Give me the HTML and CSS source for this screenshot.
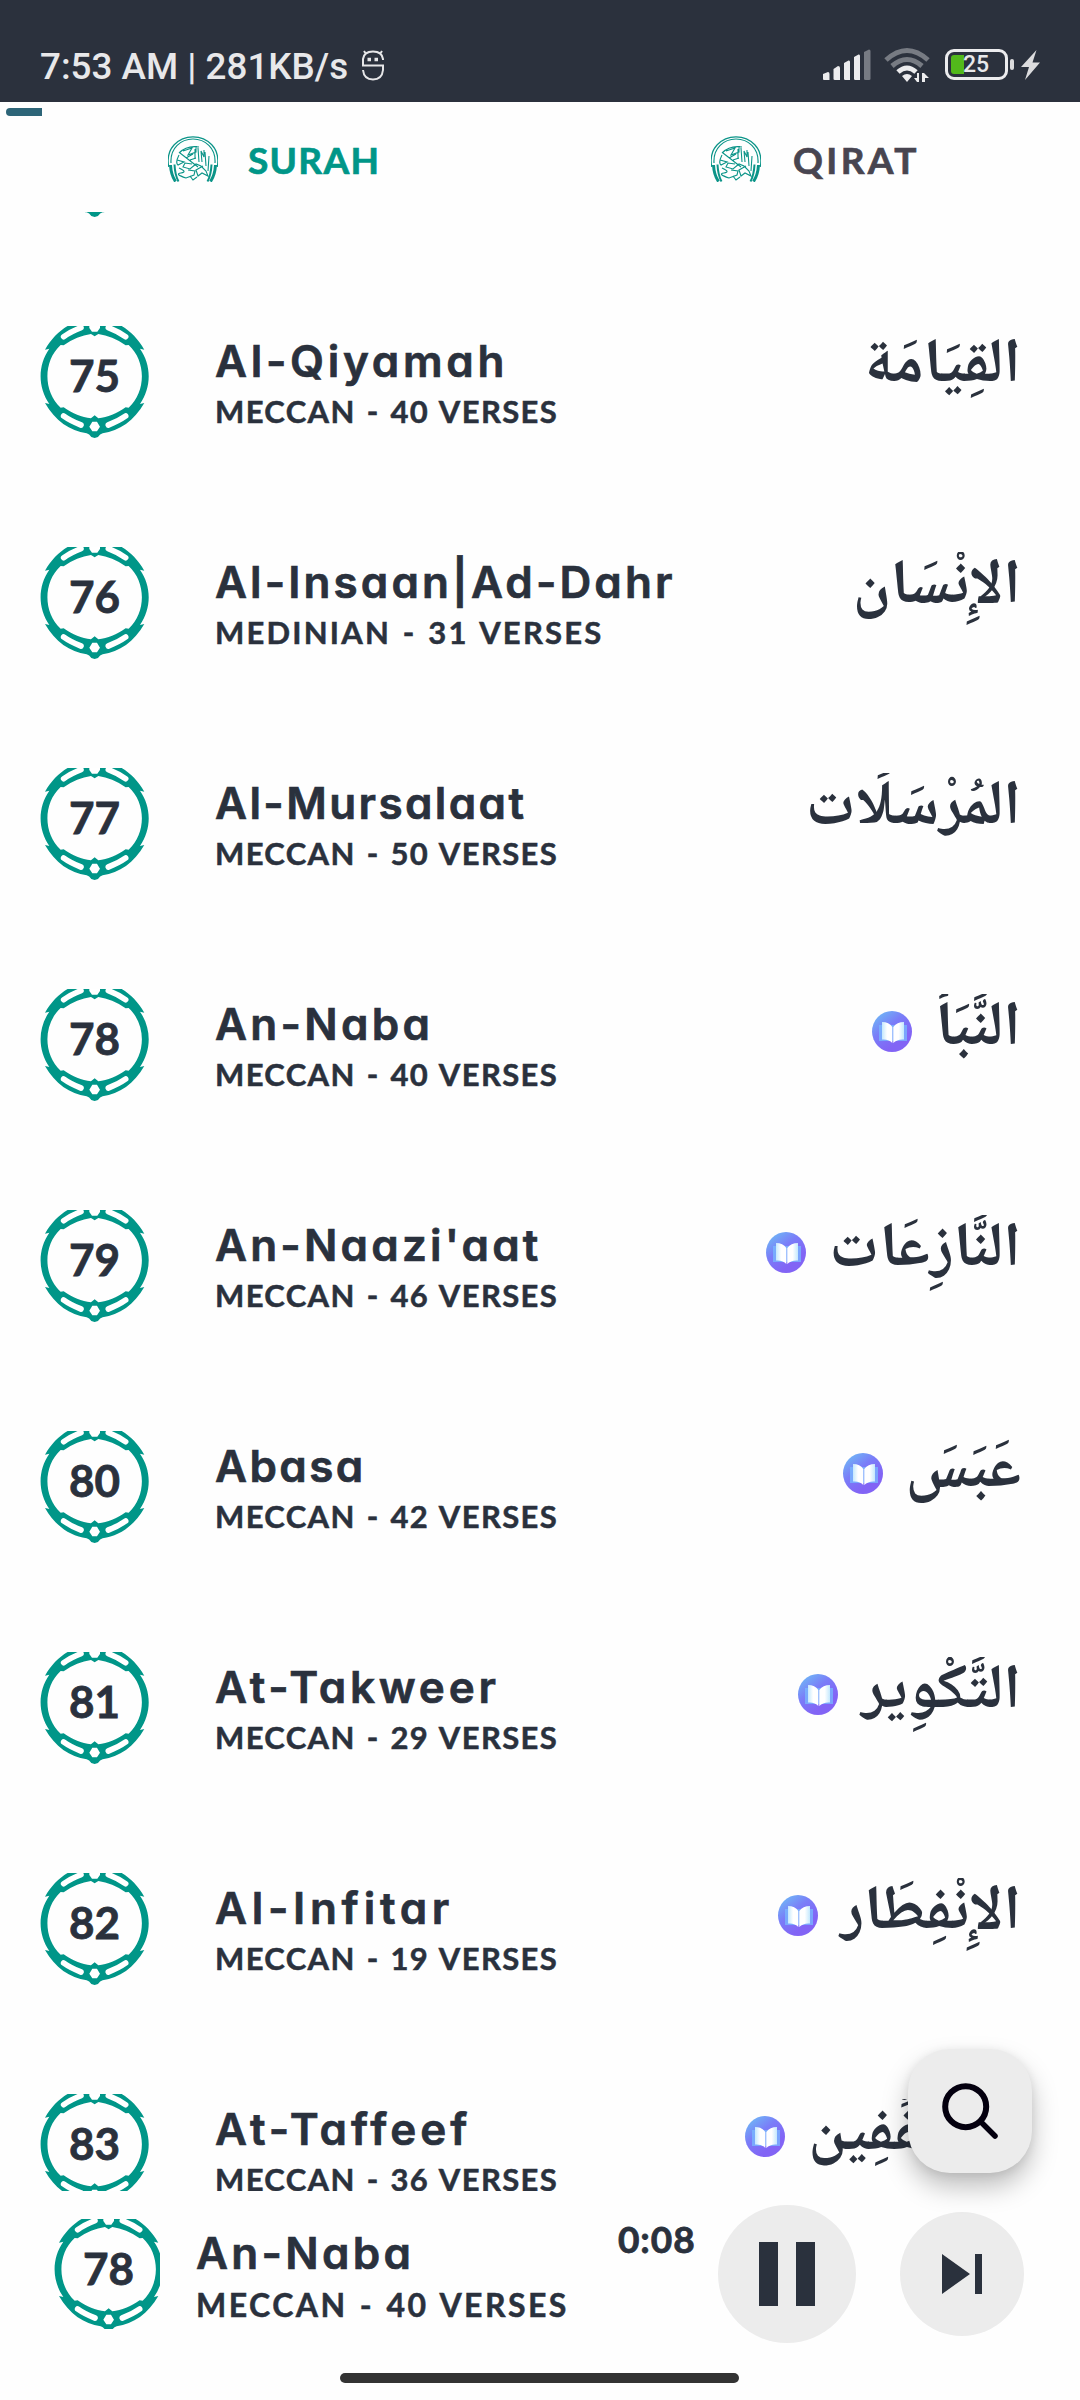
FILE: index.html
```
<!DOCTYPE html>
<html lang="en">
<head>
<meta charset="utf-8">
<title>Surah</title>
<link rel="stylesheet" href="styles.css">
</head>
<body>
<svg class="defs" width="0" height="0" aria-hidden="true">
  <defs>
    <linearGradient id="bg" x1="0" y1="0" x2=".6" y2=".8"><stop offset="0" stop-color="#6cc7f5"/><stop offset=".55" stop-color="#7a7df8"/><stop offset="1" stop-color="#8264f5"/></linearGradient>
    <linearGradient id="pl" x1="0" x2="1"><stop offset="0" stop-color="#c4e8fd"/><stop offset=".5" stop-color="#fff"/></linearGradient>
    <linearGradient id="pr" x1="1" x2="0"><stop offset="0" stop-color="#c4e8fd"/><stop offset=".5" stop-color="#fff"/></linearGradient>
  </defs>
  <symbol id="badge" viewBox="60 78 328 336">
    <path fill="#009688" fill-rule="evenodd" d="M224 414L214 411Q208 402 200 400C150 393 105 362 75 309L88 312C53 262 53 196 88 146L75 149C105 96 150 65 200 58H248C298 65 343 96 373 149L360 146C395 196 395 262 360 312L373 309C343 362 298 393 248 400Q240 402 234 411ZM224 346L213 355C185 352 158 341 131 322L122 323C69 275 69 183 122 135L131 136C158 117 185 106 213 102L224 109L235 102C263 106 290 117 317 136L326 135C379 183 379 275 326 323L317 322C290 341 263 352 235 355Z"/>
    <g stroke="#fff" stroke-width="17" stroke-linecap="round"><path d="M131 348Q152 363 183 375M317 348Q296 363 265 375M131 110Q152 95 183 83M317 110Q296 95 265 83" fill="none"/></g>
    <path fill="#fff" d="M217 365H231L240 380L231 394H217L208 380ZM208 70H240V84L232 95H216L208 84Z"/>
  </symbol>
  <symbol id="book" viewBox="0 0 40 41">
    <ellipse cx="20" cy="20.5" rx="20" ry="20.5" fill="url(#bg)"/>
    <path fill="#78b9ff" opacity=".75" d="M7 14H35V30H7Z"/>
    <path fill="url(#pl)" d="M10 11Q17 11 20.300 16V32Q17 28 10 28.500Z"/>
    <path fill="url(#pr)" d="M32 11Q25 11 21.300 16V32Q25 28 32 28.500Z"/>
  </symbol>
  <symbol id="logo" viewBox="0 0 50 46">
    <g fill="none" stroke="#0b9488">
      <path stroke-width="1.200" d="M.8 31C-3 12 11 .8 25 .8S53 12 49.200 31M3 27C2 12 13 3 25 3S48 12 47 27"/>
      <path stroke-width="3" d="M2.500 29Q3 39 7.500 45.500M47.500 29Q47 39 42.500 45.500"/>
      <path stroke-width="2" d="M6.500 28.500Q7 39 10.500 45.500M43.500 28.500Q43 39 39.500 45.500"/>
      <path stroke-width="1.100" d="M11 17Q19 9 31 11M12 17L30 31M11 19Q7 27 10 29L16 26L9 24M15 15L24 12L20 19L28 16V10M18 22L25 18M27 23V13M31 26L30 12M34 26L33 15L36 21V14M38 30L37 16M40 35L41 20M22 24L28 22M24 28L17 27L15 31L22 33L28 28L33 30L38 35L40 40L34 37L30 40L28 34L35 30M11 32Q20 36 13 37T18 42L26 39L27 35L20 34M22 40L25 44L29 41"/>
    </g>
  </symbol>
</svg>

<header class="status">
  <span class="status-text">7:53 AM | 281KB/s</span>
  <svg class="bug" width="22" height="31" viewBox="0 0 22 31" fill="none" stroke="#e6e6e8" stroke-width="2">
    <path d="M21 10V9Q20 1.500 11 1.500T1 9V15.500H21V20Q20 29.500 11 29.500T1 20M4 4L2 1M18 4L20 1"/><path stroke-width="3.500" d="M5.500 9.500H9M12.500 9.500H16"/>
  </svg>
  <div class="status-icons">
    <svg width="48" height="31" viewBox="0 0 48 31" fill="#ececee"><path d="M0 25L5 23Q6.500 23 6.500 25V31H1Q0 31 0 30ZM10.500 20L15 17Q17 17 17 19V31H12Q10.500 31 10.500 30ZM21 14L25.500 11.500Q27 11 27 13V31H22.500Q21 31 21 30ZM31 8L35.500 5.500Q37 5 37 7V31H32.500Q31 31 31 30Z"/><path fill="#777b83" d="M41 3L46 .5Q47.500 .5 47.500 2V30Q47.500 31 46 31H42.500Q41 31 41 30Z"/></svg>
    <svg class="wifi" width="46" height="36" viewBox="0 0 46 36" fill="none" stroke-width="5">
      <g stroke="#777b83"><path d="M2 13Q23-6 44 13"/><path d="M8 19Q23 6 38 19"/></g>
      <path stroke="#ececee" d="M14 25Q23 17 32 25"/><path fill="#ececee" d="M18 29Q23 25 28 29L23 35ZM35 26V35H33L30 31H33V26ZM38 35V26H40L45 31H41V35Z"/>
    </svg>
    <div class="battery"><i></i><span>25</span></div><b class="nub"></b>
    <svg width="19" height="30" viewBox="0 0 19 30"><path fill="#dcdcde" d="M15.500 0L0 17H8L4 30L19 12.500H11.500Z"/></svg>
  </div>
</header>

<div class="progress"></div>

<nav class="tabs">
  <a class="tab active"><svg width="50" height="46"><use href="#logo"/></svg><span>SURAH</span></a>
  <a class="tab"><svg width="50" height="46"><use href="#logo"/></svg><span>QIRAT</span></a>
</nav>

<main class="list">
  <div class="row"><div class="badge"><svg><use href="#badge"/></svg></div></div>
  <div class="row r75"><div class="badge"><svg><use href="#badge"/></svg><span>75</span></div><div class="info"><h2>Al-Qiyamah</h2><p>MECCAN - 40 VERSES</p></div><div class="ar" lang="ar">القِيَامَة</div></div>
  <div class="row r76"><div class="badge"><svg><use href="#badge"/></svg><span>76</span></div><div class="info"><h2>Al-Insaan|Ad-Dahr</h2><p>MEDINIAN - 31 VERSES</p></div><div class="ar" lang="ar">الإِنْسَان</div></div>
  <div class="row r77"><div class="badge"><svg><use href="#badge"/></svg><span>77</span></div><div class="info"><h2>Al-Mursalaat</h2><p>MECCAN - 50 VERSES</p></div><div class="ar" lang="ar">المُرْسَلَات</div></div>
  <div class="row r78"><div class="badge"><svg><use href="#badge"/></svg><span>78</span></div><div class="info"><h2>An-Naba</h2><p>MECCAN - 40 VERSES</p></div><svg class="book"><use href="#book"/></svg><div class="ar" lang="ar">النَّبَأ</div></div>
  <div class="row r79"><div class="badge"><svg><use href="#badge"/></svg><span>79</span></div><div class="info"><h2>An-Naazi'aat</h2><p>MECCAN - 46 VERSES</p></div><svg class="book"><use href="#book"/></svg><div class="ar" lang="ar">النَّازِعَات</div></div>
  <div class="row r80"><div class="badge"><svg><use href="#badge"/></svg><span>80</span></div><div class="info"><h2>Abasa</h2><p>MECCAN - 42 VERSES</p></div><svg class="book"><use href="#book"/></svg><div class="ar" lang="ar">عَبَسَ</div></div>
  <div class="row r81"><div class="badge"><svg><use href="#badge"/></svg><span>81</span></div><div class="info"><h2>At-Takweer</h2><p>MECCAN - 29 VERSES</p></div><svg class="book"><use href="#book"/></svg><div class="ar" lang="ar">التَّكْوِير</div></div>
  <div class="row r82"><div class="badge"><svg><use href="#badge"/></svg><span>82</span></div><div class="info"><h2>Al-Infitar</h2><p>MECCAN - 19 VERSES</p></div><svg class="book"><use href="#book"/></svg><div class="ar" lang="ar">الإِنْفِطَار</div></div>
  <div class="row r83"><div class="badge"><svg><use href="#badge"/></svg><span>83</span></div><div class="info"><h2>At-Taffeef</h2><p>MECCAN - 36 VERSES</p></div><svg class="book"><use href="#book"/></svg><div class="ar" lang="ar">المُطَفِّفِين</div></div>
</main>

<button class="fab" aria-label="Search"><svg width="60" height="60" viewBox="0 0 60 60" fill="none" stroke="#04000f" stroke-width="6" stroke-linecap="round"><circle cx="25.700" cy="25.700" r="20.500"/><path d="M42 42L55 55" stroke-width="5.500"/></svg></button>

<footer class="player r78">
  <div class="badge"><svg><use href="#badge"/></svg><span>78</span></div>
  <div class="info"><h2>An-Naba</h2><p>MECCAN - 40 VERSES</p></div>
  <time>0:08</time>
  <button class="pause" aria-label="Pause"><i></i><i></i></button>
  <button class="next" aria-label="Next"><svg width="40" height="40" viewBox="0 0 40 40" fill="#2a313d"><path d="M0 0L28 20L0 40ZM33 0H40V40H33Z"/></svg></button>
</footer>
<div class="home"></div>
</body>
</html>
```
FILE: styles.css
```
* { box-sizing: border-box; }
body { margin: 0; width: 1080px; height: 2400px; position: relative; overflow: hidden; background: #fefefe; color: #2a313d; font-family: Lato, "Liberation Sans", sans-serif; display: flex; flex-direction: column; }
.defs { position: absolute; }
h2, p { margin: 0; white-space: nowrap; }
button { border: 0; padding: 0; background: #ececec; display: flex; align-items: center; justify-content: center; }
svg { display: block; flex: none; }

.status { flex: none; height: 102px; padding: 44px 40px 0; background: #2b313d; display: flex; align-items: flex-start; }
.status-text { font: 500 36.800px/45px Roboto, sans-serif; color: #e8e8ea; white-space: nowrap; width: 308px; }
.bug { margin: 6px 0 0 14px; }
.status-icons { margin-left: auto; display: flex; align-items: center; height: 41px; }
.wifi { margin: 0 15px 0 13px; }
.battery { width: 63px; height: 31px; border: 3.500px solid #ececee; border-radius: 9px; padding: 3px; display: flex; align-items: center; }
.battery i { width: 13px; height: 19px; background: #52b91b; border-radius: 3px 0 0 3px; }
.battery span { font: 500 23px/24px Roboto, sans-serif; color: #e8e8ea; margin-left: -1px; }
.nub { width: 4px; height: 11px; border-radius: 2px; background: #dcdcde; margin: 0 7px 0 2px; }

.progress { flex: none; width: 36px; height: 8px; margin: 6px 0 0 6px; background: #2d6578; border-radius: 4px 0 0 4px; }
.tabs { flex: none; height: 96px; display: flex; padding-top: 20px; }
.tab { width: 537px; padding-left: 168px; display: flex; gap: 32px; font-size: 37px; line-height: 48px; font-weight: 700; letter-spacing: 3.400px; color: #484550; -webkit-text-stroke: .7px; }
.tab.active { width: 543px; color: #009688; gap: 30px; letter-spacing: 1.300px; }

.list { flex: none; height: 1979px; overflow: hidden; }
.row { height: 221px; display: flex; align-items: flex-start; padding: 0 59px 0 40px; }
.row:first-child { margin-top: -107px; }
.badge { flex: none; width: 110px; height: 112px; display: grid; }
.badge > * { grid-area: 1 / 1; }
.badge svg { width: 109.300px; height: 112px; }
.badge span { font-size: 44px; line-height: 52px; font-weight: 700; text-align: center; padding-top: 23px; width: 109px; -webkit-text-stroke: .8px; }
.info { margin-left: 65px; padding-top: 8px; flex: 1; }
.info h2 { font: 600 44px/54px Inter, sans-serif; font-feature-settings: "cv11" 1; -webkit-text-stroke: .7px; letter-spacing: var(--track, 2px); }
.info p { font-size: 31px; line-height: 38px; padding-top: 4px; font-weight: 700; letter-spacing: 1.360px; word-spacing: 2px; -webkit-text-stroke: .5px; }
.r75 { --track: 3.700px; }
.r76 { --track: 3.100px; }
.r77 { --track: 2.400px; }
.r78 { --track: 3.300px; }
.r79 { --track: 3.200px; }
.r80 { --track: 2.400px; }
.r81 { --track: 3.800px; }
.r82 { --track: 4.700px; }
.r83 { --track: 4px; }
.r76 .info p { letter-spacing: 2.200px; }
.book { width: 40px; height: 41px; margin: 22px 23px 0 0; }
.ar { font: 700 62.500px/75px "Noto Naskh Arabic", Amiri, "Noto Sans Arabic", "DejaVu Sans", serif; direction: rtl; white-space: nowrap; margin-top: 5px; clip-path: inset(0 -20px -40px -20px); }

.fab { position: absolute; left: 908px; top: 2049px; width: 124px; height: 124px; border-radius: 42px; box-shadow: 0 14px 26px rgba(0,0,0,.25), 0 2px 10px rgba(0,0,0,.08); }

.player { flex: none; height: 182px; display: flex; align-items: flex-start; padding-left: 54px; }
.player .badge { width: 106px; height: 110px; overflow: hidden; margin-top: 28px; }
.player .info { flex: none; width: 422px; margin-left: 36px; padding-top: 35px; }
.player .info p { font-size: 32px; padding-top: 2px; line-height: 46px; letter-spacing: 2.450px; }
.player time { font-size: 37px; line-height: 46px; font-weight: 700; margin-top: 25px; width: 100px; letter-spacing: .9px; -webkit-text-stroke: .8px; }
.pause { width: 138px; height: 138px; border-radius: 50%; gap: 18px; margin-top: 14px; }
.pause i { width: 19px; height: 64px; background: #2a313d; }
.next { width: 124px; height: 124px; border-radius: 50%; margin: 21px 0 0 44px; }
.home { flex: none; width: 399px; height: 10px; border-radius: 5px; background: #333; margin-left: 340px; }
```
